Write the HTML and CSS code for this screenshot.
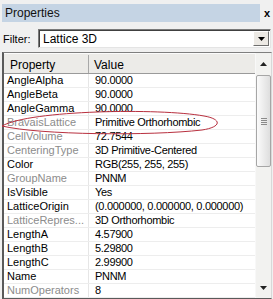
FILE: index.html
```html
<!DOCTYPE html>
<html lang="en">

<head>
    <meta charset="UTF-8">
    <title>Properties</title>
    <link rel="stylesheet" href="styles.css">
</head>

<body>
    <div class="panel">
        <div class="titlebar">
            <div class="title">Properties</div>
            <div class="close">x</div>
        </div>

        <div class="filter-row">
            <span class="filter-label">Filter:</span>
            <div class="combo">
                <span class="combo-text">Lattice 3D</span>
                <span class="combo-button">
                    <svg width="7" height="4" viewBox="0 0 7 4"><path d="M0 0h7L3.5 4z" fill="#000"/></svg>
                </span>
            </div>
        </div>

        <div class="grid">
            <div class="table">
                <div class="row header">
                    <div class="cell name">Property</div>
                    <div class="cell value">Value</div>
                </div>
                <div class="row"><div class="cell name">AngleAlpha</div><div class="cell value">90.0000</div></div>
                <div class="row"><div class="cell name">AngleBeta</div><div class="cell value">90.0000</div></div>
                <div class="row"><div class="cell name">AngleGamma</div><div class="cell value">90.0000</div></div>
                <div class="row readonly"><div class="cell name">BravaisLattice</div><div class="cell value">Primitive Orthorhombic</div></div>
                <div class="row readonly"><div class="cell name">CellVolume</div><div class="cell value">72.7544</div></div>
                <div class="row readonly"><div class="cell name">CenteringType</div><div class="cell value">3D Primitive-Centered</div></div>
                <div class="row"><div class="cell name">Color</div><div class="cell value">RGB(255, 255, 255)</div></div>
                <div class="row readonly"><div class="cell name">GroupName</div><div class="cell value">PNNM</div></div>
                <div class="row"><div class="cell name">IsVisible</div><div class="cell value">Yes</div></div>
                <div class="row"><div class="cell name">LatticeOrigin</div><div class="cell value">(0.000000, 0.000000, 0.000000)</div></div>
                <div class="row readonly"><div class="cell name">LatticeRepres...</div><div class="cell value">3D Orthorhombic</div></div>
                <div class="row"><div class="cell name">LengthA</div><div class="cell value">4.57900</div></div>
                <div class="row"><div class="cell name">LengthB</div><div class="cell value">5.29800</div></div>
                <div class="row"><div class="cell name">LengthC</div><div class="cell value">2.99900</div></div>
                <div class="row"><div class="cell name">Name</div><div class="cell value">PNNM</div></div>
                <div class="row readonly"><div class="cell name">NumOperators</div><div class="cell value">8</div></div>
            </div>

            <div class="scrollbar">
                <div class="sb-arrow">
                    <svg width="7" height="4" viewBox="0 0 7 4"><path d="M3.5 0L7 4H0z" fill="#222"/></svg>
                </div>
                <div class="sb-track">
                    <div class="sb-thumb">
                        <span class="grip"></span>
                        <span class="grip"></span>
                        <span class="grip"></span>
                        <span class="grip"></span>
                    </div>
                </div>
                <div class="sb-arrow down">
                    <svg width="7" height="4" viewBox="0 0 7 4"><path d="M0 0h7L3.5 4z" fill="#222"/></svg>
                </div>
            </div>
        </div>

        <!-- hand drawn mark over the BravaisLattice row -->
        <svg class="mark" width="273" height="299" viewBox="0 0 273 299">
            <path d="M2 126 C 30 110, 160 108, 204 116 C 222 119, 222 127, 202 130 C 150 136, 40 135, 2 126 Z"
                fill="none" stroke="#b8303f" stroke-width="1"/>
        </svg>
    </div>
</body>

</html>
```

FILE: styles.css
```css
body {
    margin: 0;
    padding: 0;
    background-color: #f0f0f0;
    font-family: "Liberation Sans", Arial, sans-serif;
    font-size: 11px;
    color: #000000;
}

.panel {
    position: relative;
    width: 273px;
    height: 299px;
    overflow: hidden;
    padding-top: 4px;
    box-sizing: border-box;
}

/* Title bar */
.titlebar {
    display: flex;
    align-items: center;
    height: 18px;
    margin-left: 2px;
}

.title {
    flex: 1;
    height: 18px;
    line-height: 18px;
    padding-left: 3px;
    background-color: #c5d4e4;
    font-size: 12px;
    color: #111111;
}

.close {
    width: 12px;
    text-align: center;
    font-weight: bold;
    font-size: 11px;
    margin-left: 1px;
}

/* Filter row */
.filter-row {
    display: flex;
    align-items: center;
    height: 19px;
    margin-top: 7px;
}

.filter-label {
    width: 38px;
    padding-left: 3px;
    box-sizing: border-box;
}

.combo {
    display: flex;
    align-items: center;
    width: 233px;
    height: 19px;
    box-sizing: border-box;
    background-color: #ffffff;
    border-top: 1px solid #7a7a7a;
    border-left: 1px solid #7a7a7a;
    border-right: 1px solid #e4e4e4;
    border-bottom: 1px solid #e4e4e4;
    box-shadow: inset 1px 1px 0 #404040;
}

.combo-text {
    flex: 1;
    padding-left: 4px;
    font-size: 12px;
}

.combo-button {
    display: flex;
    align-items: center;
    justify-content: center;
    width: 16px;
    height: 15px;
    margin-right: 1px;
    box-sizing: border-box;
    background-color: #ece9e4;
    border-top: 1px solid #ffffff;
    border-left: 1px solid #ffffff;
    border-right: 1px solid #6e6e6e;
    border-bottom: 1px solid #6e6e6e;
}

/* Property grid */
.grid {
    display: flex;
    width: 270px;
    height: 247px;
    margin-top: 4px;
    margin-left: 2px;
    box-sizing: border-box;
    overflow: hidden;
    background-color: #ffffff;
    border-top: 1px solid #7f7f7f;
    border-left: 2px solid #5a5a5a;
    border-right: 1px solid #d8d8d8;
    border-bottom: 1px solid #5a5a5a;
}

.table {
    flex: 1;
    overflow: hidden;
}

.row {
    display: flex;
    height: 14px;
    line-height: 13px;
    box-sizing: border-box;
    border-bottom: 1px solid #ededed;
    white-space: nowrap;
}

.cell {
    overflow: hidden;
}

.name {
    width: 85px;
    flex: none;
    padding-left: 3px;
    box-sizing: border-box;
    border-right: 1px solid #e6e6e6;
}

.value {
    flex: 1;
    padding-left: 6px;
    letter-spacing: -0.3px;
}

.readonly .name {
    color: #8c8c8c;
}

.row.header {
    height: 21px;
    line-height: 21px;
    padding-top: 1px;
    background-color: #ecebe8;
    border-top: 1px solid #fbfbfb;
    border-bottom: 1px solid #9a9a9a;
    font-size: 12px;
}

.header .name {
    padding-left: 6px;
    border-right: 1px solid #a8a8a8;
}

.header .value {
    padding-left: 5px;
    letter-spacing: 0;
}

/* Scrollbar */
.scrollbar {
    display: flex;
    flex-direction: column;
    width: 15px;
    flex: none;
    background-color: #f2f2f0;
    border-left: 1px solid #f8f8f8;
}

.sb-arrow {
    display: flex;
    align-items: center;
    justify-content: center;
    height: 21px;
    flex: none;
}

.sb-track {
    flex: 1;
    padding-top: 1px;
}

.sb-thumb {
    display: flex;
    flex-direction: column;
    align-items: center;
    justify-content: center;
    gap: 1px;
    height: 92px;
    box-sizing: border-box;
    border: 1px solid #a6a6a6;
    border-radius: 2px;
    background: linear-gradient(to right, #fbfbfb, #dedede);
}

.grip {
    display: block;
    width: 6px;
    height: 1px;
    background-color: #8a8a8a;
}

.mark {
    position: absolute;
    top: 0;
    left: 0;
    pointer-events: none;
}
```
